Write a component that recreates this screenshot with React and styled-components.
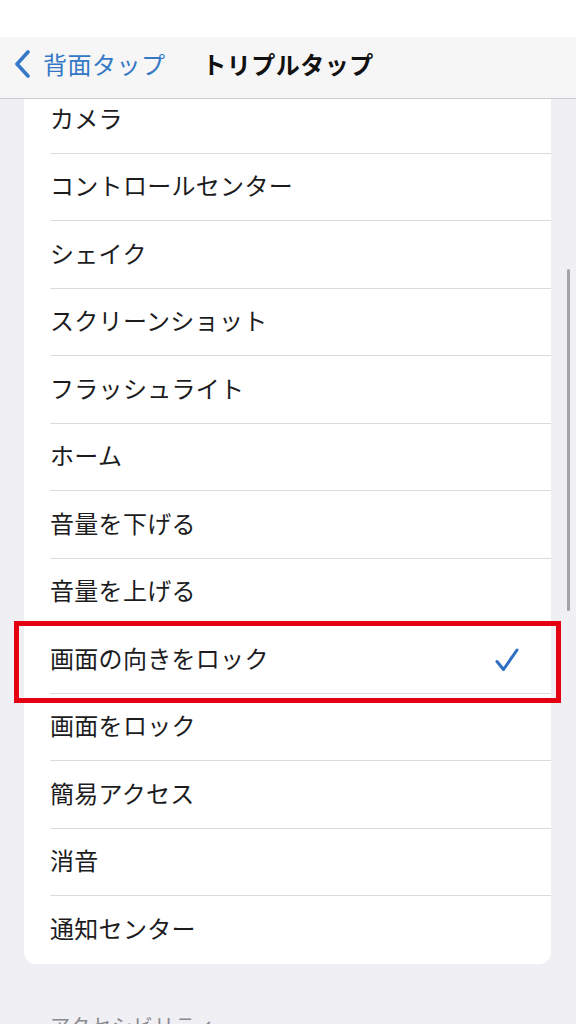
import React from "react";
import styled, { createGlobalStyle } from "styled-components";

const GlobalStyle = createGlobalStyle`
  html, body {
    margin: 0;
    padding: 0;
    background: #efeff4;
  }
  body {
    font-family: "Noto Sans CJK JP", "Noto Sans", sans-serif;
    -webkit-font-smoothing: antialiased;
  }
`;

const Screen = styled.div`
  display: flex;
  flex-direction: column;
  width: 576px;
  height: 1024px;
  overflow: hidden;
  background: #efeff4;
`;

const StatusBar = styled.div`
  height: 37px;
  flex-shrink: 0;
  background: #ffffff;
`;

const NavBar = styled.div`
  display: grid;
  grid-template-columns: 1fr auto 1fr;
  align-items: center;
  height: 62px;
  box-sizing: border-box;
  padding-bottom: 7px;
  flex-shrink: 0;
  background: #f6f6f6;
  border-bottom: 1px solid #cdcdcf;
  position: relative;
  z-index: 2;
`;

const BackButton = styled.div`
  display: flex;
  align-items: center;
  gap: 12px;
  padding-left: 13px;
  color: #3478c6;
  font-size: 24px;
  line-height: 1.2;
  letter-spacing: 0.5px;
`;

const Title = styled.div`
  font-size: 24px;
  line-height: 1.2;
  font-weight: 700;
  color: #111;
  letter-spacing: 0.5px;
`;

const Viewport = styled.div`
  flex: 1;
  position: relative;
  overflow: hidden;
`;

const Content = styled.div`
  margin-top: -13px;
`;

const Card = styled.div`
  margin: 0 25px 0 24px;
  background: #ffffff;
  border-radius: 12px;
`;

const Row = styled.div`
  position: relative;
  display: flex;
  align-items: center;
  justify-content: space-between;
  height: 67.5px;
  box-sizing: border-box;
  padding: 0 32px 3px 26px;
  font-size: 24px;
  line-height: 1.2;
  color: #1c1c1e;
  letter-spacing: 0.3px;

  &::after {
    content: "";
    display: ${(p) => (p.last ? "none" : "block")};
    position: absolute;
    left: 26px;
    right: 0;
    bottom: 0;
    height: 1px;
    background: #dcdcde;
  }
`;

const CheckMark = styled.svg`
  margin-top: 3px;
`;

const Highlight = styled.div`
  position: absolute;
  left: -10px;
  right: -10px;
  top: -5px;
  bottom: -9px;
  border: 5px solid #e50012;
  pointer-events: none;
`;

const SectionHeader = styled.div`
  padding: 47px 0 0 50px;
  font-size: 20px;
  color: #8a8a8e;
  letter-spacing: 1px;
`;

const ScrollThumb = styled.div`
  position: absolute;
  right: 6px;
  top: 170px;
  width: 3px;
  height: 342px;
  border-radius: 2px;
  background: #a3a3a8;
`;

const Chevron = () => (
  <svg width="18" height="28" viewBox="0 0 18 28" fill="none">
    <path
      d="M15 2 L4 14 L15 26"
      stroke="#3478c6"
      strokeWidth="3.6"
      strokeLinecap="round"
      strokeLinejoin="round"
    />
  </svg>
);

const Check = () => (
  <CheckMark width="24" height="24" viewBox="0 0 24 24" fill="none">
    <path
      d="M2 13.5 L8.5 21.5 L22 2"
      stroke="#2f6fc4"
      strokeWidth="3"
      strokeLinecap="round"
      strokeLinejoin="round"
    />
  </CheckMark>
);

const items = [
  "カメラ",
  "コントロールセンター",
  "シェイク",
  "スクリーンショット",
  "フラッシュライト",
  "ホーム",
  "音量を下げる",
  "音量を上げる",
  "画面の向きをロック",
  "画面をロック",
  "簡易アクセス",
  "消音",
  "通知センター"
];

const selected = "画面の向きをロック";

const App = () => {
  return (
    <Screen>
      <GlobalStyle />
      <StatusBar />
      <NavBar>
        <BackButton>
          <Chevron />
          背面タップ
        </BackButton>
        <Title>トリプルタップ</Title>
        <div />
      </NavBar>
      <Viewport>
        <Content>
          <Card>
            {items.map((item, i) => (
              <Row key={item} last={i === items.length - 1}>
                {item}
                {item === selected && (
                  <>
                    <Check />
                    <Highlight />
                  </>
                )}
              </Row>
            ))}
          </Card>
          <SectionHeader>アクセシビリティ</SectionHeader>
        </Content>
        <ScrollThumb />
      </Viewport>
    </Screen>
  );
};

export default App;
